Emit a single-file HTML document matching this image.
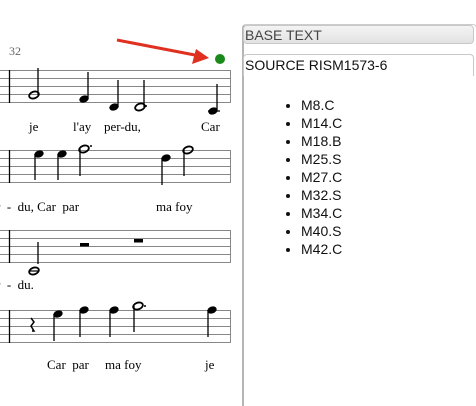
<!DOCTYPE html>
<html><head><style>
body{margin:0;width:476px;height:405px;background:#fff;overflow:hidden;position:relative;font-family:"Liberation Sans",sans-serif}
.p{position:absolute;left:242px;top:24px;width:232px;height:381px;border-left:2px solid #b5b5b5;border-right:1px solid #ccc;border-top:1px solid #ccc;border-radius:4px 4px 0 0}
.b1{position:absolute;left:243px;top:25px;width:231px;height:19px;background:linear-gradient(#f4f4f4,#e2e2e2);border:1px solid #c8c8c8;border-radius:4px;font-size:14px;color:#444;line-height:19px;padding-left:1px;box-sizing:border-box}
.b2{position:absolute;left:243px;top:54px;width:231px;height:22px;border:1px solid #c8c8c8;border-bottom:none;border-radius:4px 4px 0 0;font-size:14px;color:#111;line-height:20px;padding-left:1px;box-sizing:border-box}
ul{position:absolute;left:258px;top:96px;margin:0;padding-left:43px;font-size:14px;line-height:18px;color:#111}
</style></head><body>
<svg width="240" height="405" style="position:absolute;left:0;top:0" font-family="Liberation Serif,serif" font-size="13">
<text x="9" y="55" fill="#666" font-size="12">32</text>
<g stroke="#888" stroke-width="1">
<path d="M0 70.5H231M0 78.5H231M0 86.5H231M0 94.5H231M0 102.5H231"/>
<path d="M0 150.5H231M0 158.5H231M0 166.5H231M0 174.5H231M0 182.5H231"/>
<path d="M0 230.5H231M0 238.5H231M0 246.5H231M0 254.5H231M0 262.5H231"/>
<path d="M0 310.5H231M0 318.5H231M0 326.5H231M0 334.5H231M0 342.5H231"/>
<path d="M230.5 70V103M230.5 150V183M230.5 230V263M230.5 310V343"/>
</g>
<g stroke="#000" stroke-width="1.3">
<path d="M9.5 70V103M9.5 150V183M9.5 230V263M9.5 310V343"/>
<path d="M38 95V68M88 99V72M118 107V80M144 107V80M217 110V84M208 111H220"/>
<path d="M35 154V180M58 154V180M80 149V176M162 158V185M184 150V176"/>
<path d="M38 242V264M30 271H39"/>
<path d="M54 314V341M80 310V337M110 310V337M134 306V332M208 310V337"/>
</g>
<g fill="#000">
<ellipse cx="34" cy="95" rx="5" ry="3.3" transform="rotate(-20 34 95)" fill="none" stroke="#000" stroke-width="1.8"/>
<ellipse cx="84" cy="99" rx="4.8" ry="3.5" transform="rotate(-20 84 99)"/>
<ellipse cx="114" cy="107" rx="4.8" ry="3.5" transform="rotate(-20 114 107)"/>
<ellipse cx="140" cy="107" rx="5" ry="3.3" transform="rotate(-20 140 107)" fill="none" stroke="#000" stroke-width="1.8"/><circle cx="146" cy="106" r="1"/>
<ellipse cx="213" cy="111" rx="4.8" ry="3.5" transform="rotate(-20 213 111)"/>
<circle cx="220" cy="59" r="5" fill="#1a8a1a"/>
<ellipse cx="39" cy="154" rx="4.8" ry="3.5" transform="rotate(-20 39 154)"/>
<ellipse cx="62" cy="154" rx="4.8" ry="3.5" transform="rotate(-20 62 154)"/>
<ellipse cx="84" cy="149" rx="5" ry="3.3" transform="rotate(-20 84 149)" fill="none" stroke="#000" stroke-width="1.8"/><circle cx="91" cy="146" r="1"/>
<ellipse cx="166" cy="158" rx="4.8" ry="3.5" transform="rotate(-20 166 158)"/>
<ellipse cx="188" cy="150" rx="5" ry="3.3" transform="rotate(-20 188 150)" fill="none" stroke="#000" stroke-width="1.8"/>
<ellipse cx="34" cy="271" rx="5" ry="3.3" transform="rotate(-20 34 271)" fill="none" stroke="#000" stroke-width="1.8"/>
<rect x="80" y="243" width="9" height="3.5"/><rect x="134" y="239" width="9" height="3.5"/>
<path d="M31 318l3 4-3 4 3 5-2 0" stroke="#000" stroke-width="1.5" fill="none"/>
<ellipse cx="58" cy="314" rx="4.8" ry="3.5" transform="rotate(-20 58 314)"/>
<ellipse cx="84" cy="310" rx="4.8" ry="3.5" transform="rotate(-20 84 310)"/>
<ellipse cx="114" cy="310" rx="4.8" ry="3.5" transform="rotate(-20 114 310)"/>
<ellipse cx="138" cy="306" rx="5" ry="3.3" transform="rotate(-20 138 306)" fill="none" stroke="#000" stroke-width="1.8"/><circle cx="145" cy="306" r="1"/>
<ellipse cx="212" cy="310" rx="4.8" ry="3.5" transform="rotate(-20 212 310)"/>
</g>
<path d="M117 40L200 56" stroke="#e03020" stroke-width="3"/><path d="M209 58L192 64 196 49Z" fill="#e03020"/>
<text x="29" y="131">je</text><text x="73" y="131">l'ay</text><text x="104" y="131">per-du,</text><text x="201" y="131">Car</text>
<text x="-4" y="211">r&#160; -&#160; du, Car&#160; par</text><text x="156" y="211">ma foy</text>
<text x="-4" y="289">r&#160; -&#160; du.</text>
<text x="47" y="369">Car&#160; par</text><text x="105" y="369">ma foy</text><text x="205" y="369">je</text>
</svg>
<div class="p"></div>
<div class="b1">BASE TEXT</div>
<div class="b2">SOURCE RISM1573-6</div>
<ul><li>M8.C</li><li>M14.C</li><li>M18.B</li><li>M25.S</li><li>M27.C</li><li>M32.S</li><li>M34.C</li><li>M40.S</li><li>M42.C</li></ul>
</body></html>
